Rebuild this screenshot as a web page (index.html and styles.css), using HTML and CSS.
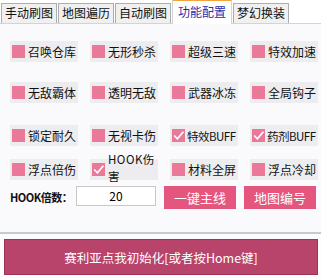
FILE: index.html
```html
<!DOCTYPE html>
<html lang="zh-CN">
<head>
  <meta charset="UTF-8">
  <title>功能配置</title>
  <link rel="stylesheet" href="styles.css">
</head>
<body>
  <div class="window">
    <div class="tabs">
      <div class="tab">手动刷图</div>
      <div class="tab">地图遍历</div>
      <div class="tab">自动刷图</div>
      <div class="tab active">功能配置</div>
      <div class="tab">梦幻换装</div>
    </div>

    <div class="panel">
      <div class="grid row1">
        <label class="opt"><span class="box"></span>召唤仓库</label>
        <label class="opt"><span class="box"></span>无形秒杀</label>
        <label class="opt"><span class="box"></span>超级三速</label>
        <label class="opt"><span class="box"></span>特效加速</label>
      </div>
      <div class="grid row2">
        <label class="opt"><span class="box"></span>无敌霸体</label>
        <label class="opt"><span class="box"></span>透明无敌</label>
        <label class="opt"><span class="box"></span>武器冰冻</label>
        <label class="opt"><span class="box"></span>全局钩子</label>
      </div>
      <div class="grid row3">
        <label class="opt"><span class="box"></span>锁定耐久</label>
        <label class="opt"><span class="box"></span>无视卡伤</label>
        <label class="opt"><span class="box checked"><svg viewBox="0 0 12 12"><path d="M2 6 L5 9 L10.5 2.5" /></svg></span><span class="latin">特效BUFF</span></label>
        <label class="opt"><span class="box checked"><svg viewBox="0 0 12 12"><path d="M2 6 L5 9 L10.5 2.5" /></svg></span><span class="latin">药剂BUFF</span></label>
      </div>
      <div class="grid row4">
        <label class="opt"><span class="box"></span>浮点倍伤</label>
        <label class="opt wrap"><span class="box checked"><svg viewBox="0 0 12 12"><path d="M2 6 L5 9 L10.5 2.5" /></svg></span><span class="two">HOOK伤<br>害</span></label>
        <label class="opt"><span class="box"></span>材料全屏</label>
        <label class="opt"><span class="box"></span>浮点冷却</label>
      </div>

      <div class="hook-row">
        <span class="hook-label">HOOK倍数：</span>
        <input class="hook-input" type="text" value="20">
        <button class="btn">一键主线</button>
        <button class="btn">地图编号</button>
      </div>
    </div>

    <div class="footer">
      <button class="big-btn">赛利亚点我初始化[或者按Home键]</button>
    </div>
  </div>
</body>
</html>
```

FILE: styles.css
```css
body {
  margin: 0;
  font-family: "Noto Sans CJK SC", "Noto Sans", sans-serif;
  font-size: 12px;
  background-color: #fafafc;
  color: #111;
}
.window {
  width: 321px;
  height: 278px;
  display: flex;
  flex-direction: column;
}
.tabs {
  display: flex;
  align-items: flex-end;
  height: 23px;
  padding-left: 1px;
  gap: 1px;
  background: #ffffff;
  border-bottom: 1px solid #d4d4d4;
}
.tab {
  height: 19px;
  line-height: 18px;
  padding: 0 3px;
  background: #f0f0f0;
  border: 1px solid #adadad;
  border-bottom: none;
  font-size: 12px;
  color: #111;
}
.tab.active {
  height: 23px;
  line-height: 22px;
  background: #ffffff;
  color: #2a2eaa;
  border-color: #d4d4d4;
  border-top: 2px solid #f0a43c;
  margin-bottom: -1px;
  padding: 0 5px;
}
.panel {
  flex: 1;
  padding: 0 4px 0 10px;
}
.grid {
  display: grid;
  grid-template-columns: repeat(4, 68px);
  column-gap: 12px;
}
.row1 { margin-top: 17px; }
.row2 { margin-top: 20px; }
.row3 { margin-top: 22px; }
.row4 { margin-top: 13px; }
.opt {
  display: flex;
  align-items: center;
  gap: 3px;
  height: 21px;
  padding-left: 2px;
  background: #ededf0;
  white-space: nowrap;
}
.latin {
  font-size: 11.5px;
  letter-spacing: -0.5px;
  margin-left: -1px;
}
.box {
  width: 13px;
  height: 13px;
  flex: none;
  background: #ea7899;
  display: flex;
}
.box svg {
  width: 13px;
  height: 13px;
}
.box svg path {
  fill: none;
  stroke: #ffffff;
  stroke-width: 1.6;
}
.wrap {
  overflow: visible;
}
.two {
  line-height: 17px;
  font-size: 11.5px;
  margin-top: -3px;
  white-space: normal;
  letter-spacing: 0.5px;
}
.hook-row {
  display: flex;
  align-items: center;
  margin-top: 5px;
  height: 24px;
}
.hook-label {
  width: 66px;
  font-size: 11px;
  font-weight: bold;
  letter-spacing: -0.5px;
}
.hook-input {
  width: 78px;
  height: 18px;
  padding: 0;
  border: 1px solid #c8c8c8;
  background: #ffffff;
  text-align: center;
  font-family: "Noto Sans CJK SC", sans-serif;
  font-size: 12px;
  box-sizing: content-box;
  margin-bottom: 3px;
}
.btn {
  width: 72px;
  height: 23px;
  margin-left: 8px;
  border: none;
  background: #e5567f;
  color: #ffffff;
  font-family: "Noto Sans CJK SC", sans-serif;
  font-size: 13px;
  padding: 0;
}
.footer {
  border-top: 2px solid #c4ccd2;
  padding: 5px 3px 3px 4px;
  background: #fcfcfd;
  margin-top: auto;
}
.big-btn {
  width: 314px;
  height: 36px;
  border: 1px solid #9c3256;
  background: #b8436b;
  color: #ffffff;
  font-family: "Noto Sans CJK SC", sans-serif;
  font-size: 12.5px;
  padding: 0;
}
```
